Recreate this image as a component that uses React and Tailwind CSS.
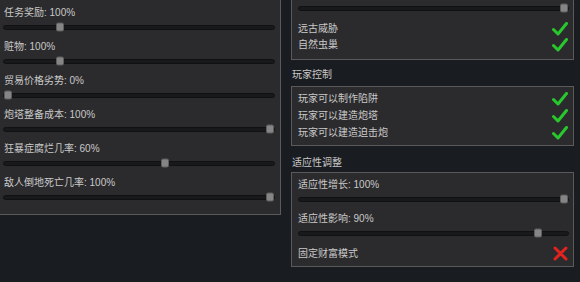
// Ajustes de escenario: paneles con deslizadores y casillas
const FONT = { fontFamily: '"Liberation Sans", "Noto Sans CJK SC", sans-serif' };

// Deslizador: pista oscura con un tirador gris encima
function Slider({ pct, className = '' }) {
  return (
    <div className={`flex h-[14px] items-center ${className}`}>
      <div className="relative h-[5px] w-full rounded-full border border-[#101112] bg-[#18191a]">
        <div
          className="absolute top-1/2 h-[9px] w-[8px] -translate-y-1/2 rounded-[2px] border border-[#5e5e5e] bg-[#858585]"
          style={{ left: `calc(${pct} * (100% - 8px))` }}
        />
      </div>
    </div>
  );
}

function Check() {
  return (
    <svg width="16" height="14" viewBox="0 0 16 14" className="shrink-0">
      <path d="M1.5 7.5 L6 12 L14.5 1.5" fill="none" stroke="#27c72d" strokeWidth="3" strokeLinecap="round" strokeLinejoin="round" />
    </svg>
  );
}

function Cross() {
  return (
    <svg width="15" height="15" viewBox="0 0 15 15" className="shrink-0">
      <path d="M2 2 L13 13 M13 2 L2 13" stroke="#e0231f" strokeWidth="3" strokeLinecap="round" />
    </svg>
  );
}

function Toggle({ label, on }) {
  return (
    <div className="flex h-[17px] items-center justify-between pl-[6px] pr-[5px]">
      <span>{label}</span>
      {on ? <Check /> : <Cross />}
    </div>
  );
}

const LEFT = [
  ['任务奖励: 100%', 0.2],
  ['赃物: 100%', 0.2],
  ['贸易价格劣势: 0%', 0],
  ['炮塔整备成本: 100%', 1],
  ['狂暴症腐烂几率: 60%', 0.6],
  ['敌人倒地死亡几率: 100%', 1],
];

export default function App() {
  return (
    <div className="flex h-[282px] w-[580px] overflow-hidden bg-[#191c20] text-[10px] leading-[14px] text-[#c9c9c9]" style={FONT}>
      {/* columna izquierda */}
      <div className="w-[281px] shrink-0">
        <div className="flex flex-col gap-[6px] border-r border-b border-[#5a5a5a] bg-[#2b2b2d] pt-[6px] pb-[10px]">
          {LEFT.map(([label, pct]) => (
            <div key={label}>
              <div className="h-[14px] pl-[4px]">{label}</div>
              <Slider pct={pct} className="pl-[3px] pr-[5px]" />
            </div>
          ))}
        </div>
      </div>

      {/* columna derecha */}
      <div className="ml-[10px] w-[283px] shrink-0">
        <div className="border-x border-b border-[#5a5a5a] bg-[#2b2b2d] pt-[1px] pb-[6px]">
          <Slider pct={1} className="pl-[6px] pr-[4px]" />
          <div className="mt-[6px]">
            <div className="flex h-[16px] items-center justify-between pl-[6px] pr-[5px]">
              <span>远古威胁</span>
              <Check />
            </div>
            <div className="flex h-[16px] items-center justify-between pl-[6px] pr-[5px]">
              <span>自然虫巢</span>
              <Check />
            </div>
          </div>
        </div>

        <div className="pt-[8px] pb-[4px] pl-[1px]">玩家控制</div>
        <div className="border border-[#5a5a5a] bg-[#2b2b2d] pt-[3px] pb-[4px]">
          <Toggle label="玩家可以制作陷阱" on />
          <Toggle label="玩家可以建造炮塔" on />
          <Toggle label="玩家可以建造迫击炮" on />
        </div>

        <div className="pt-[10px] pb-[2px] pl-[1px]">适应性调整</div>
        <div className="border border-[#5a5a5a] bg-[#2b2b2d] pt-[5px] pb-[4px]">
          <div className="h-[14px] pl-[6px]">适应性增长: 100%</div>
          <Slider pct={1} className="pl-[6px] pr-[4px]" />
          <div className="mt-[6px] h-[14px] pl-[6px]">适应性影响: 90%</div>
          <Slider pct={0.9} className="pl-[6px] pr-[4px]" />
          <div className="mt-[5px]">
            <Toggle label="固定财富模式" on={false} />
          </div>
        </div>
      </div>
    </div>
  );
}
